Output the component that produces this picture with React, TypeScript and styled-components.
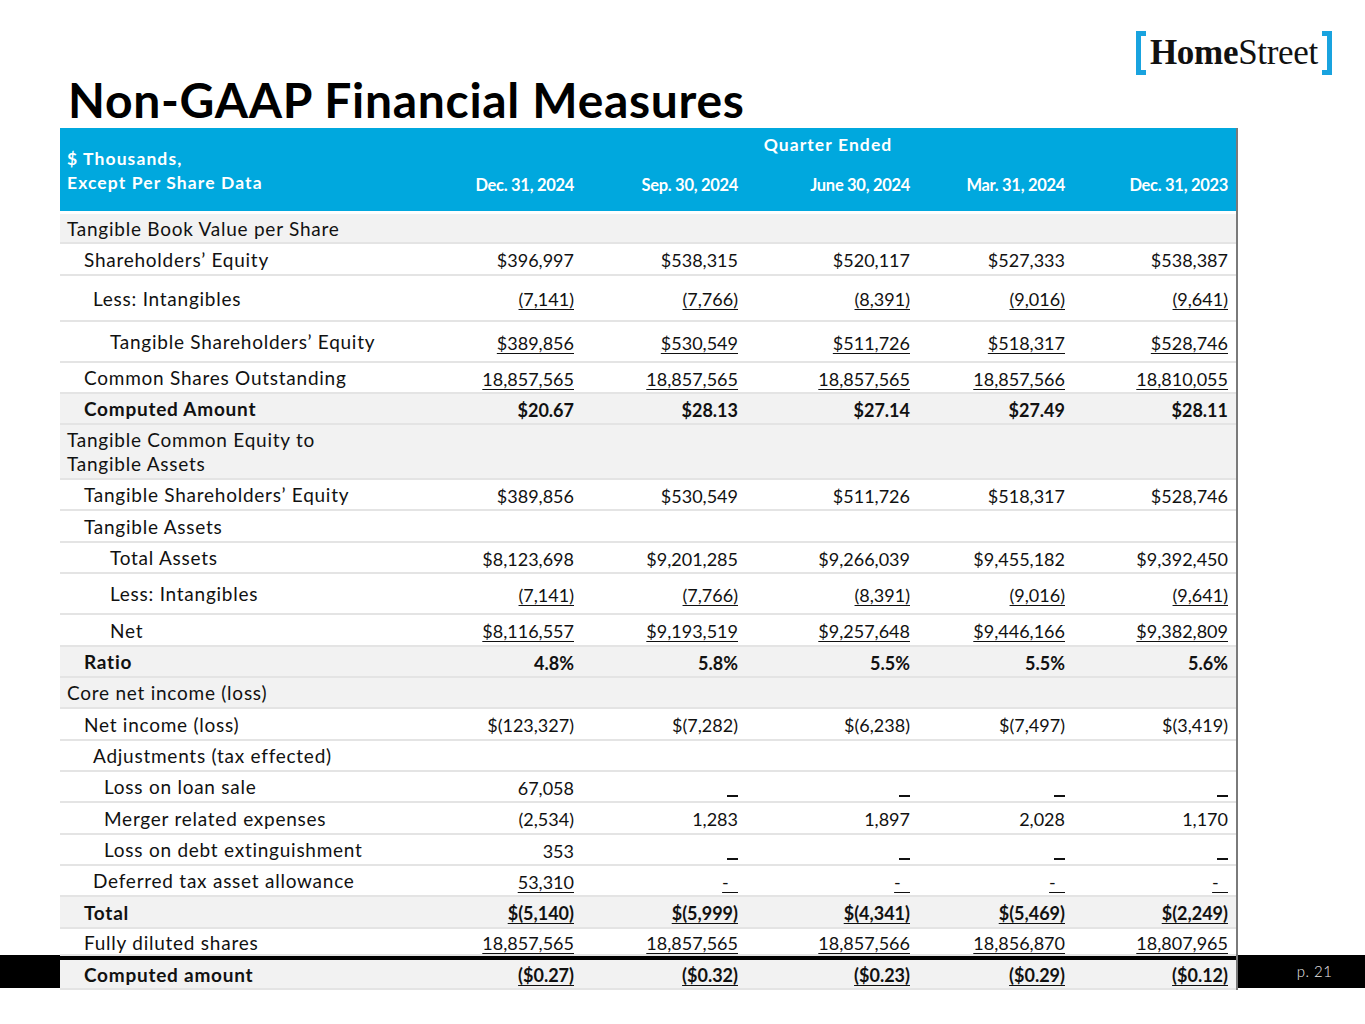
import React from 'react';
import styled, { createGlobalStyle } from 'styled-components';

const GlobalStyle = createGlobalStyle`
  html, body {
    margin: 0;
    padding: 0;
    background: #ffffff;
  }
  body {
    font-family: Lato, 'Noto Sans', 'DejaVu Sans', sans-serif;
    color: #111111;
  }
`;

const Slide = styled.div`
  position: relative;
  width: 1365px;
  height: 1024px;
  overflow: hidden;
  background: #ffffff;
`;

const TopArea = styled.header`
  display: flex;
  flex-direction: column;
`;

const LogoRow = styled.div`
  display: flex;
  justify-content: flex-end;
  padding: 33px 33px 0 0;
`;

const Logo = styled.div`
  display: flex;
  align-items: center;
  height: 40px;
  gap: 4px;
`;

const Bracket = styled.span<{ side: 'left' | 'right' }>`
  display: block;
  width: 5px;
  height: 34px;
  border: 5px solid #19a3df;
  border-${({ side }) => (side === 'left' ? 'right' : 'left')}: none;
`;

const LogoText = styled.span`
  font-family: 'Liberation Serif', 'DejaVu Serif', serif;
  font-size: 35px;
  line-height: 40px;
  color: #111111;
  letter-spacing: -0.3px;

  b {
    font-weight: 700;
  }
`;

const Title = styled.h1`
  margin: 2px 0 0 0;
  padding-left: 68px;
  height: 53px;
  font-size: 48px;
  line-height: 50px;
  font-weight: 700;
  color: #000000;
  letter-spacing: 0.7px;
`;

const Table = styled.section`
  position: relative;
  z-index: 1;
  width: 1178px;
  margin-left: 60px;
  border-right: 2px solid #7a7a7a;
  box-sizing: border-box;
  display: flex;
  flex-direction: column;
`;

const COLS = '360px 162px 164px 172px 155px 163px';

const HeaderRow = styled.div`
  display: grid;
  grid-template-columns: ${COLS};
  grid-template-rows: 32px 51px;
  background: #00a8de;
  border-bottom: 3px solid #ffffff;
  color: #ffffff;
  font-weight: 700;
`;

const HeaderLabel = styled.div`
  grid-row: 1 / span 2;
  grid-column: 1;
  display: flex;
  flex-direction: column;
  justify-content: center;
  padding: 2px 0 0 7px;
  font-size: 17.5px;
  letter-spacing: 1.1px;
  line-height: 24px;
`;

const QuarterEnded = styled.div`
  grid-row: 1;
  grid-column: 2 / span 5;
  text-align: center;
  padding: 4px 0 0 0;
  font-size: 17.5px;
  letter-spacing: 1.1px;
  line-height: 26px;
`;

const DateCell = styled.div`
  grid-row: 2;
  display: flex;
  align-items: center;
  justify-content: flex-end;
  padding: 0 8px 2px 0;
  font-size: 16.5px;
  letter-spacing: -0.3px;
`;

const Row = styled.div<{ h: number; shaded?: boolean; bold?: boolean; rule?: boolean }>`
  display: grid;
  grid-template-columns: ${COLS};
  box-sizing: border-box;
  height: ${({ h }) => h}px;
  background: ${({ shaded }) => (shaded ? '#f2f2f2' : '#ffffff')};
  border-bottom: 2px solid #e4e4e4;
  border-top: ${({ rule }) => (rule ? '4px solid #000000' : 'none')};
  font-size: 18px;
  font-weight: ${({ bold }) => (bold ? 700 : 400)};
  line-height: 24px;
`;

const Label = styled.div<{ indent: number }>`
  display: flex;
  flex-direction: column;
  justify-content: center;
  padding: 1px 0 0 ${({ indent }) => 7 + indent}px;
  font-size: 19px;
  letter-spacing: 0.75px;
`;

const Cell = styled.div`
  display: flex;
  align-items: center;
  justify-content: flex-end;
  padding-right: 8px;
  padding-top: 2px;
`;

const Amount = styled.span<{ ul?: boolean }>`
  text-decoration: ${({ ul }) => (ul ? 'underline' : 'none')};
  text-decoration-thickness: 1px;
  text-underline-offset: 3px;
  white-space: pre;
`;

const Dash = styled.span`
  display: inline-block;
  width: 11px;
  height: 2px;
  margin-top: 16px;
  background: #111111;
`;

const FooterBand = styled.footer`
  position: absolute;
  left: 0;
  right: 0;
  top: 955px;
  height: 33px;
  z-index: 0;
  background: #000000;
  display: flex;
  justify-content: flex-end;
  align-items: center;
`;

const PageNo = styled.span`
  width: 127px;
  text-align: center;
  color: #ececec;
  font-size: 15px;
  font-weight: 300;
  letter-spacing: 0.5px;
  padding: 0 0 2px 26px;
  box-sizing: border-box;
`;

type Value = string | 'DASH';

type RowData = {
  label: string | string[];
  indent: number;
  h: number;
  bold?: boolean;
  shaded?: boolean;
  ul?: boolean;
  rule?: boolean;
  values?: Value[];
};

const intangibles = ['(7,141)', '(7,766)', '(8,391)', '(9,016)', '(9,641)'];
const tangibleEquity = ['$389,856', '$530,549', '$511,726', '$518,317', '$528,746'];

const rows: RowData[] = [
  { label: 'Tangible Book Value per Share', indent: 0, h: 30, shaded: true },
  { label: 'Shareholders’ Equity', indent: 17, h: 32, values: ['$396,997', '$538,315', '$520,117', '$527,333', '$538,387'] },
  { label: 'Less: Intangibles', indent: 26, h: 46, ul: true, values: intangibles },
  { label: 'Tangible Shareholders’ Equity', indent: 43, h: 41, ul: true, values: tangibleEquity },
  { label: 'Common Shares Outstanding', indent: 17, h: 31, ul: true, values: ['18,857,565', '18,857,565', '18,857,565', '18,857,566', '18,810,055'] },
  { label: 'Computed Amount', indent: 17, h: 31, bold: true, shaded: true, values: ['$20.67', '$28.13', '$27.14', '$27.49', '$28.11'] },
  { label: ['Tangible Common Equity to', 'Tangible Assets'], indent: 0, h: 55, shaded: true },
  { label: 'Tangible Shareholders’ Equity', indent: 17, h: 31, values: tangibleEquity },
  { label: 'Tangible Assets', indent: 17, h: 32 },
  { label: 'Total Assets', indent: 43, h: 31, values: ['$8,123,698', '$9,201,285', '$9,266,039', '$9,455,182', '$9,392,450'] },
  { label: 'Less: Intangibles', indent: 43, h: 41, ul: true, values: intangibles },
  { label: 'Net', indent: 43, h: 32, ul: true, values: ['$8,116,557', '$9,193,519', '$9,257,648', '$9,446,166', '$9,382,809'] },
  { label: 'Ratio', indent: 17, h: 31, bold: true, shaded: true, values: ['4.8%', '5.8%', '5.5%', '5.5%', '5.6%'] },
  { label: 'Core net income (loss)', indent: 0, h: 31, shaded: true },
  { label: 'Net income (loss)', indent: 17, h: 32, values: ['$(123,327)', '$(7,282)', '$(6,238)', '$(7,497)', '$(3,419)'] },
  { label: 'Adjustments (tax effected)', indent: 26, h: 31 },
  { label: 'Loss on loan sale', indent: 37, h: 31, values: ['67,058', 'DASH', 'DASH', 'DASH', 'DASH'] },
  { label: 'Merger related expenses', indent: 37, h: 32, values: ['(2,534)', '1,283', '1,897', '2,028', '1,170'] },
  { label: 'Loss on debt extinguishment', indent: 37, h: 31, values: ['353', 'DASH', 'DASH', 'DASH', 'DASH'] },
  { label: 'Deferred tax asset allowance', indent: 26, h: 31, ul: true, values: ['53,310', '-\u00a0\u00a0', '-\u00a0\u00a0', '-\u00a0\u00a0', '-\u00a0\u00a0'] },
  { label: 'Total', indent: 17, h: 32, bold: true, shaded: true, ul: true, values: ['$(5,140)', '$(5,999)', '$(4,341)', '$(5,469)', '$(2,249)'] },
  { label: 'Fully diluted shares', indent: 17, h: 27, ul: true, values: ['18,857,565', '18,857,565', '18,857,566', '18,856,870', '18,807,965'] },
  { label: 'Computed amount', indent: 17, h: 34, bold: true, shaded: true, ul: true, rule: true, values: ['($0.27)', '($0.32)', '($0.23)', '($0.29)', '($0.12)'] },
];

const dates = ['Dec. 31, 2024', 'Sep. 30, 2024', 'June 30, 2024', 'Mar. 31, 2024', 'Dec. 31, 2023'];

const App = () => {
  return (
    <Slide>
      <GlobalStyle />
      <TopArea>
        <LogoRow>
          <Logo>
            <Bracket side="left" />
            <LogoText>
              <b>Home</b>Street
            </LogoText>
            <Bracket side="right" />
          </Logo>
        </LogoRow>
        <Title>Non-GAAP Financial Measures</Title>
      </TopArea>

      <Table>
        <HeaderRow>
          <HeaderLabel>
            <span>$ Thousands,</span>
            <span>Except Per Share Data</span>
          </HeaderLabel>
          <QuarterEnded>Quarter Ended</QuarterEnded>
          {dates.map((d) => (
            <DateCell key={d}>{d}</DateCell>
          ))}
        </HeaderRow>

        {rows.map((r, i) => (
          <Row key={i} h={r.h} shaded={r.shaded} bold={r.bold} rule={r.rule}>
            <Label indent={r.indent}>
              {Array.isArray(r.label) ? r.label.map((l) => <span key={l}>{l}</span>) : r.label}
            </Label>
            {[0, 1, 2, 3, 4].map((c) => {
              const v = r.values?.[c];
              return (
                <Cell key={c}>
                  {v === 'DASH' ? <Dash /> : v ? <Amount ul={r.ul}>{v}</Amount> : null}
                </Cell>
              );
            })}
          </Row>
        ))}
      </Table>

      <FooterBand>
        <PageNo>p. 21</PageNo>
      </FooterBand>
    </Slide>
  );
};

export default App;
